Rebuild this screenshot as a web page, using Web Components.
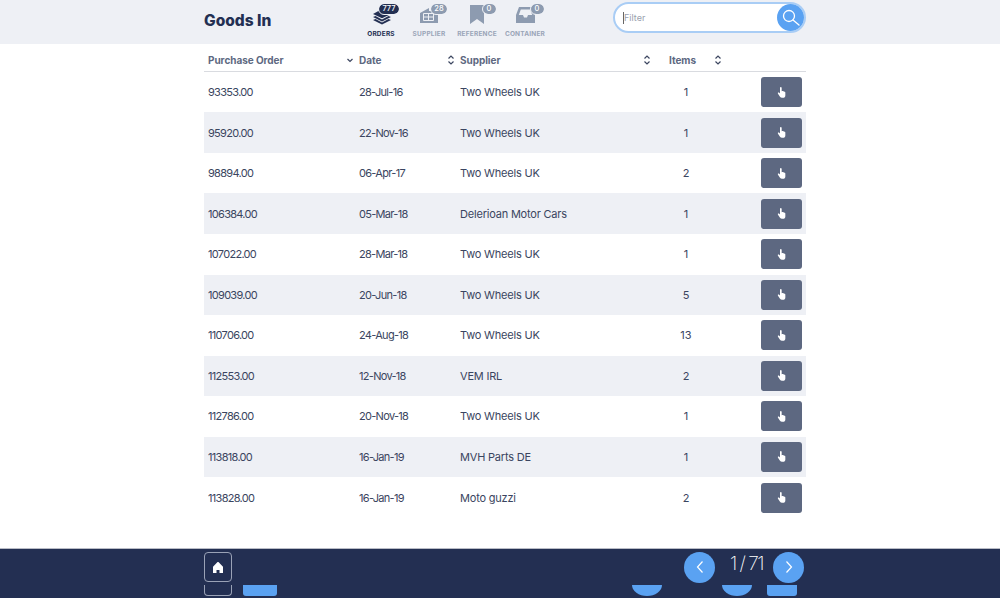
<!DOCTYPE html>
<html>
<head>
<meta charset="utf-8">
<title>Goods In</title>
<style>
  html, body { margin: 0; height: 100%; }
  body {
    font-family: Inter, "Liberation Sans", sans-serif;
    color: #2d3a5c;
    display: flex;
    flex-direction: column;
    height: 598px;
    overflow: hidden;
    background: #fff;
  }
</style>
</head>
<body>
<goods-header></goods-header>
<order-table></order-table>
<goods-footer></goods-footer>

<script>
const ICONS = {
  orders: `<path d="M13 5l9 5-9 4.200L4 10z"/><path d="M4 13l2.500-1 6.500 3.500 6.500-3.500 2.500 1-9 4.500z"/><path d="M4 16l2.500-1 6.500 3.500 6.500-3.500 2.500 1-9 4.500z"/>`,
  supplier: `<path d="M3 9l9-5v3h9v12H3z"/><path fill="none" stroke="#eef0f5" d="M6.500 9.500h10v7h-10zM6.500 13h10M11.500 9.500v7"/>`,
  reference: `<path d="M5 1h14v19l-7-5-7 5z"/>`,
  container: `<path fill-rule="evenodd" d="M6 3h13l3 8v8H3v-8zM7.800 5.500 5.800 11h4.200l1 2.500h3l1-2.500h4.200l-2-5.500z"/>`
};

const HAND = `<svg width="10" height="11" viewBox="0 0 12 13" fill="#fff"><path d="M3.600 1.200C3.600.5 4 0 4.600 0s1 .5 1 1.200V5l.8-.2c.5-.1.9.1 1.100.4.500-.2 1-.1 1.200.3.600-.1 1.300.2 1.300 1V10c0 1.500-1.100 2.800-2.800 2.800H6c-1 0-1.800-.5-2.400-1.300L1.200 8c-.4-.5-.3-1.100.1-1.400.4-.3 1-.2 1.400.2l.9 1z"/></svg>`;

class NavTab extends HTMLElement {
  constructor() {
    super();
    this.attachShadow({ mode: "open" });
    const active = this.hasAttribute("active");
    const count = this.getAttribute("count");
    const left = { 1: 29.5, 2: 26, 3: 22 }[count.length];
    const width = { 1: 13, 2: 16, 3: 20 }[count.length];
    this.shadowRoot.innerHTML = `
      <style>
        :host { display: flex; flex-direction: column; align-items: center; width: 48px; position: relative; }
        svg { display: block; margin-top: 4px; fill: ${active ? "#232f52" : "#8d9bb0"}; }
        .label {
          font-size: 6.500px; font-weight: 700; letter-spacing: .2px; margin-top: 3.500px; line-height: 9px;
          color: ${active ? "#232f52" : "#9aa5b8"};
          white-space: nowrap;
        }
        .badge {
          position: absolute; top: 3.500px; left: ${left}px;
          width: ${width}px; height: 10px; line-height: 10px; border-radius: 5px;
          background: ${active ? "#232f52" : "#8d9bb0"}; color: #fff;
          font-size: 7.500px; font-weight: 500; text-align: center;
          outline: 1.500px solid #eef0f5;
        }
      </style>
      <svg width="24" height="22" viewBox="0 0 24 22">${ICONS[this.getAttribute("icon")]}</svg>
      <div class="label"><slot></slot></div>
      <div class="badge">${count}</div>`;
  }
}
customElements.define("nav-tab", NavTab);

class FilterBox extends HTMLElement {
  constructor() {
    super();
    this.attachShadow({ mode: "open" });
    this.shadowRoot.innerHTML = `
      <style>
        :host {
          display: flex; align-items: center; justify-content: space-between;
          width: 193px; height: 31px; box-sizing: border-box; background: #fff;
          border: 2px solid #a9cdf5; border-radius: 16px; padding: 0 0 0 8px;
        }
        .text { font-size: 9px; color: #9a9fae; border-left: 1px solid #666; line-height: 12px; }
        .go {
          width: 27px; height: 27px; border-radius: 50%; background: #5aa2f2;
          display: flex; align-items: center; justify-content: center;
        }
      </style>
      <div class="text">Filter</div>
      <div class="go">
        <svg width="20" height="20" viewBox="0 0 20 20" fill="none" stroke="#fff" stroke-width="1.300" stroke-linecap="round">
          <circle cx="8" cy="8" r="5.500"/><path d="M12 12l6 5"/>
        </svg>
      </div>`;
  }
}
customElements.define("filter-box", FilterBox);

class GoodsHeader extends HTMLElement {
  constructor() {
    super();
    this.attachShadow({ mode: "open" });
    this.shadowRoot.innerHTML = `
      <style>
        :host { display: block; height: 44px; background: #eef0f5; flex: none; }
        .wrap { width: 602px; margin-left: 204px; height: 100%; display: flex; align-items: flex-start; }
        h1 { margin: 0; width: 153px; font-size: 15.500px; line-height: 41px; font-weight: 800; color: #232f52; }
        nav { display: flex; width: 256px; }
        filter-box { margin-top: 2px; }
      </style>
      <div class="wrap">
        <h1>Goods In</h1>
        <nav>
          <nav-tab icon="orders" count="777" active>ORDERS</nav-tab>
          <nav-tab icon="supplier" count="28">SUPPLIER</nav-tab>
          <nav-tab icon="reference" count="0">REFERENCE</nav-tab>
          <nav-tab icon="container" count="0">CONTAINER</nav-tab>
        </nav>
        <filter-box></filter-box>
      </div>`;
  }
}
customElements.define("goods-header", GoodsHeader);

const COLUMNS = "151px 101px 196px 71px 83px";

class SortHead extends HTMLElement {
  constructor() {
    super();
    this.attachShadow({ mode: "open" });
    const down = this.hasAttribute("down");
    this.shadowRoot.innerHTML = `
      <style>
        :host {
          display: flex; align-items: center; justify-content: space-between;
          padding: 0 1px 0 ${this.getAttribute("pad") || 4}px;
          font-size: 10px; font-weight: 700; letter-spacing: -.05px; color: #5d6881;
        }
        svg { display: block; fill: none; stroke: #3c4660; stroke-width: 1.200; }
      </style>
      <span><slot></slot></span>
      ${down
        ? `<svg width="8" height="10" viewBox="0 0 8 10"><path d="M1.500 4l2.500 2.500L6.500 4"/></svg>`
        : `<svg width="8" height="10" viewBox="0 0 8 10"><path d="M1.500 3.500 4 1l2.500 2.500M1.500 6.500 4 9l2.500-2.500"/></svg>`}`;
  }
}
customElements.define("sort-head", SortHead);

class OrderRow extends HTMLElement {
  constructor() {
    super();
    this.attachShadow({ mode: "open" });
    const a = (n) => this.getAttribute(n);
    this.shadowRoot.innerHTML = `
      <style>
        :host {
          display: grid; grid-template-columns: ${COLUMNS}; align-items: center;
          height: 40.550px; box-sizing: border-box; font-size: 11px; color: #3a4560;
        }
        :host([shaded]) { background: #eef0f5; }
        .c { padding-left: 4px; }
        .num { letter-spacing: -.7px; }
        .txt { letter-spacing: -.2px; }
        .n { text-align: center; padding-right: 3px; }
        button {
          justify-self: end; margin-right: 4px; width: 41px; height: 30px; border: 0; padding: 0;
          border-radius: 3px; background: #5d6881;
          display: flex; align-items: center; justify-content: center;
        }
      </style>
      <div class="c num">${a("po")}</div>
      <div class="c num">${a("date")}</div>
      <div class="c txt">${a("supplier")}</div>
      <div class="n">${a("items")}</div>
      <button>${HAND}</button>`;
  }
}
customElements.define("order-row", OrderRow);

const ORDERS = [
  ["93353.00", "28-Jul-16", "Two Wheels UK", 1],
  ["95920.00", "22-Nov-16", "Two Wheels UK", 1],
  ["98894.00", "06-Apr-17", "Two Wheels UK", 2],
  ["106384.00", "05-Mar-18", "Delerioan Motor Cars", 1],
  ["107022.00", "28-Mar-18", "Two Wheels UK", 1],
  ["109039.00", "20-Jun-18", "Two Wheels UK", 5],
  ["110706.00", "24-Aug-18", "Two Wheels UK", 13],
  ["112553.00", "12-Nov-18", "VEM IRL", 2],
  ["112786.00", "20-Nov-18", "Two Wheels UK", 1],
  ["113818.00", "16-Jan-19", "MVH Parts DE", 1],
  ["113828.00", "16-Jan-19", "Moto guzzi", 2]
];

class OrderTable extends HTMLElement {
  constructor() {
    super();
    this.attachShadow({ mode: "open" });
    const rows = ORDERS.map((o, i) =>
      `<order-row po="${o[0]}" date="${o[1]}" supplier="${o[2]}" items="${o[3]}" ${i % 2 ? "shaded" : ""}></order-row>`
    ).join("");
    this.shadowRoot.innerHTML = `
      <style>
        :host { display: block; flex: 1; width: 602px; margin-left: 204px; }
        .head {
          display: grid; grid-template-columns: ${COLUMNS}; align-items: center;
          height: 27.800px; box-sizing: border-box; border-bottom: 1px solid #d9dbe0; padding-top: 5px;
        }
      </style>
      <div class="head">
        <sort-head down>Purchase Order</sort-head>
        <sort-head>Date</sort-head>
        <sort-head>Supplier</sort-head>
        <sort-head pad="17">Items</sort-head>
      </div>
      ${rows}`;
  }
}
customElements.define("order-table", OrderTable);

class GoodsFooter extends HTMLElement {
  constructor() {
    super();
    this.attachShadow({ mode: "open" });
    this.shadowRoot.innerHTML = `
      <style>
        :host {
          display: block; flex: none; height: 50px; box-sizing: border-box; overflow: hidden;
          background: #232f52; border-top: 1px solid #b9bcc6;
        }
        .wrap { width: 602px; margin-left: 204px; padding-top: 3px; }
        .row { display: flex; align-items: center; justify-content: space-between; height: 30px; }
        .home {
          width: 28px; height: 30px; box-sizing: border-box;
          border: 1px solid #9aa2b6; border-radius: 4px;
          display: flex; align-items: center; justify-content: center;
        }
        .pager { display: flex; align-items: center; margin-right: 2px; }
        .arrow {
          width: 31px; height: 31px; border-radius: 50%; background: #5aa2f2;
          display: flex; align-items: center; justify-content: center;
        }
        .count {
          width: 58px; box-sizing: border-box; padding-left: 5px; text-align: center;
          font-size: 19px; font-weight: 200; color: #fff;
          line-height: 28px; margin-top: -7px; letter-spacing: -1.500px;
        }
        .stubs { display: flex; height: 11px; margin-top: 3px; }
        .stub-line { width: 28px; box-sizing: border-box; border: 1px solid #9aa2b6; border-top: 0; border-radius: 0 0 4px 4px; }
        .stub-btn { background: #5aa2f2; border-radius: 0 0 3px 3px; }
        .stub-half { width: 30px; background: #5aa2f2; border-radius: 0 0 15px 15px / 0 0 11px 11px; }
      </style>
      <div class="wrap">
        <div class="row">
          <div class="home">
            <svg width="10" height="11" viewBox="0 0 10 11" fill="#fff"><path d="M5 0c.3 0 .5.1.7.3L10 4.800V11H6.500V8h-3v3H0V4.800L4.300.3C4.500.1 4.700 0 5 0z"/></svg>
          </div>
          <div class="pager">
            <div class="arrow">
              <svg width="10" height="14" viewBox="0 0 10 14" fill="none" stroke="#fff" stroke-width="1.200"><path d="M7.500 1.500 2.500 7l5 5.500"/></svg>
            </div>
            <div class="count">1 / 71</div>
            <div class="arrow">
              <svg width="10" height="14" viewBox="0 0 10 14" fill="none" stroke="#fff" stroke-width="1.200"><path d="M2.500 1.500 7.500 7l-5 5.500"/></svg>
            </div>
          </div>
        </div>
        <div class="stubs">
          <div class="stub-line"></div>
          <div class="stub-btn" style="width:34px;margin-left:11px"></div>
          <div class="stub-half" style="margin-left:355px"></div>
          <div class="stub-half" style="margin-left:60px"></div>
          <div class="stub-btn" style="width:30px;margin-left:15px"></div>
        </div>
      </div>`;
  }
}
customElements.define("goods-footer", GoodsFooter);
</script>
</body>
</html>
